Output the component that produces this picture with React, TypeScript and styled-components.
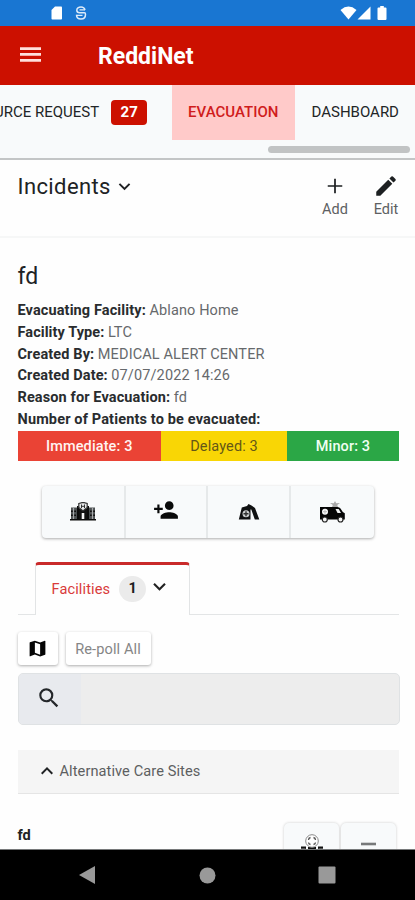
import React from "react";
import styled, { createGlobalStyle } from "styled-components";

const GlobalStyle = createGlobalStyle`
  *, *::before, *::after { box-sizing: border-box; }
  body { margin: 0; background: #fff; font-family: Roboto, "Liberation Sans", sans-serif; }
  svg { display: block; flex: none; }
`;

const Screen = styled.div`
  width: 415px;
  height: 900px;
  display: flex;
  flex-direction: column;
  overflow: hidden;
  background: #fefefe;
  color: #202224;
`;

const StatusBar = styled.div`
  flex: none;
  height: 26px;
  padding: 0 28px 0 51px;
  display: flex;
  align-items: center;
  justify-content: space-between;
  background: #1976d2;
`;

const StatusGroup = styled.div<{ $gap: number }>`
  display: flex;
  align-items: center;
  gap: ${(p) => p.$gap}px;
`;

const BatterySlot = styled.div`
  margin-left: 6px;
`;

const AppBar = styled.header`
  flex: none;
  height: 59px;
  display: flex;
  align-items: center;
  padding: 0 0 2px 20px;
  gap: 57px;
  background: #cc1000;
  color: #fff;
`;

const Brand = styled.h1`
  margin: 4px 0 0;
  font-size: 23px;
  font-weight: 700;
  line-height: 30px;
`;

const TabStrip = styled.nav`
  flex: none;
  height: 75px;
  background: #f8fafb;
  border-bottom: 2px solid #c3c5c6;
  overflow: hidden;
`;

const TabTrack = styled.div`
  display: flex;
  width: 421px;
  height: 55px;
  margin-left: -6px;
`;

const Tab = styled.div<{ $width: number; $active?: boolean; $indent?: number }>`
  flex: none;
  width: ${(p) => p.$width}px;
  padding: 0 0 1px ${(p) => p.$indent ?? 0}px;
  display: flex;
  align-items: center;
  justify-content: ${(p) => (p.$active ? "center" : "flex-start")};
  font-size: 15px;
  font-weight: ${(p) => (p.$active ? 500 : 400)};
  white-space: nowrap;
  color: ${(p) => (p.$active ? "#d01c1c" : "#222527")};
  background: ${(p) => (p.$active ? "#ffcac9" : "transparent")};
`;

const CountBadge = styled.span`
  width: 36px;
  height: 25px;
  margin-left: 12px;
  border-radius: 4px;
  display: grid;
  place-items: center;
  background: #cc1000;
  color: #fff;
  font-size: 15px;
  font-weight: 700;
`;

const ScrollThumb = styled.div`
  width: 142px;
  height: 7px;
  margin: 6px 0 0 268px;
  border-radius: 4px;
  background: #c1c3c4;
`;

const IncidentBar = styled.section`
  flex: none;
  height: 78px;
  padding: 12px 16px 0 17.5px;
  display: flex;
  justify-content: space-between;
  border-bottom: 2px solid #f6f7f7;
`;

const IncidentPicker = styled.div`
  display: flex;
  align-items: center;
  height: 28px;
  gap: 2px;
  font-size: 22px;
  letter-spacing: 0.4px;
`;

const Actions = styled.div`
  display: flex;
  gap: 25px;
`;

const Action = styled.div`
  display: flex;
  flex-direction: column;
  align-items: center;
  padding-top: 1px;
  font-size: 14.5px;
  line-height: 18px;
  color: #5d6062;
  gap: 2px;
  svg { color: #1d2022; }
`;

const Content = styled.main`
  flex: 1;
  min-height: 0;
  padding: 25px 16px 0 17.5px;
  overflow: hidden;
`;

const Title = styled.h2`
  margin: 0;
  height: 37px;
  font-size: 23px;
  font-weight: 400;
  line-height: 28px;
`;

const Details = styled.dl`
  margin: 0;
  font-size: 14.5px;
  line-height: 21.8px;
  height: 131px;
`;

const DetailRow = styled.div<{ $space: number }>`
  display: flex;
  gap: 3.5px;
  white-space: nowrap;
  letter-spacing: ${(p) => p.$space}px;
`;

const Term = styled.dt`
  font-weight: 700;
  color: #292c2e;
`;

const Value = styled.dd`
  margin: 0;
  color: #66696c;
`;

const Triage = styled.div`
  display: grid;
  grid-template-columns: 143.5px 126px 112px;
  height: 30px;
`;

const TriageCell = styled.div<{ $bg: string; $color: string; $weight: number }>`
  display: grid;
  place-items: center;
  background: ${(p) => p.$bg};
  color: ${(p) => p.$color};
  font-size: 14.5px;
  font-weight: ${(p) => p.$weight};
  letter-spacing: 0.12px;
`;

const ButtonGroup = styled.div`
  width: 332px;
  height: 52px;
  margin: 25px 0 0 24.5px;
  display: grid;
  grid-template-columns: 82px 82px 83px 85px;
  border-radius: 4px;
  background: #f8fafb;
  box-shadow: 0 1px 3px rgba(0, 0, 0, 0.32);
`;

const GroupButton = styled.div<{ $lift?: number }>`
  display: grid;
  place-items: center;
  padding-bottom: ${(p) => p.$lift ?? 0}px;
  color: #090a0a;
  & + & { border-left: 2px solid #e6e9ea; }
`;

const TabHeader = styled.div`
  display: flex;
  height: 53px;
  width: 381px;
  margin-top: 24px;
  &::before { content: ""; width: 17px; border-bottom: 1px solid #e3e5e6; }
  &::after { content: ""; flex: 1; border-bottom: 1px solid #e3e5e6; }
`;

const FacilityTab = styled.div`
  width: 155px;
  padding: 0 0 3px 16px;
  display: flex;
  align-items: center;
  border: 1px solid #e2e4e5;
  border-top: 3px solid #c92a2a;
  border-bottom: 0;
  border-radius: 4px 4px 0 0;
  color: #d93b3b;
  font-size: 14.6px;
  letter-spacing: 0.1px;
  svg { color: #222; margin: -5px 0 0 1px; }
`;

const CountPill = styled.span`
  width: 27px;
  height: 26px;
  margin-left: 9px;
  border-radius: 13px;
  display: grid;
  place-items: center;
  background: #ebebeb;
  color: #1d1d1d;
  font-size: 14.5px;
  font-weight: 700;
`;

const Toolbar = styled.div`
  display: flex;
  gap: 8px;
  margin-top: 17px;
`;

const ToolButton = styled.div<{ $width: number }>`
  width: ${(p) => p.$width}px;
  height: 33px;
  border-radius: 3px;
  display: grid;
  place-items: center;
  background: #fff;
  box-shadow: 0 1px 3px rgba(0, 0, 0, 0.32);
  color: #868686;
  font-size: 14.6px;
  letter-spacing: 0.1px;
  svg { color: #050505; }
`;

const SearchBox = styled.div`
  width: 382px;
  height: 52px;
  margin-top: 8px;
  display: flex;
  border: 1px solid #dfe2e4;
  border-radius: 5px;
  overflow: hidden;
  background: #ededed;
`;

const SearchAddon = styled.div`
  width: 62px;
  padding: 0 2px 2px 0;
  display: grid;
  place-items: center;
  background: #e8eaee;
  color: #24272a;
`;

const Accordion = styled.div`
  width: 381.5px;
  height: 44px;
  margin-top: 25px;
  padding: 0 0 2px 17px;
  display: flex;
  align-items: center;
  gap: 1px;
  background: #f5f5f5;
  border-bottom: 1px solid #e5e5e5;
  color: #5d5f61;
  font-size: 14.6px;
  letter-spacing: 0.08px;
  svg { color: #202224; }
`;

const SiteRow = styled.div`
  display: flex;
  justify-content: space-between;
  width: 378.5px;
  margin-top: 29px;
  font-size: 14.6px;
  font-weight: 700;
  line-height: 24px;
`;

const SiteActions = styled.div`
  display: flex;
  gap: 2px;
`;

const SiteButton = styled.div`
  width: 55px;
  height: 52px;
  border-radius: 5px;
  display: flex;
  justify-content: center;
  padding-top: 11px;
  background: #f8fafb;
  box-shadow: 0 0 3px rgba(0, 0, 0, 0.2);
`;

const NavBar = styled.footer`
  flex: none;
  height: 51px;
  padding: 0 79px 0 78px;
  display: flex;
  align-items: center;
  justify-content: space-between;
  background: #000;
  border-top: 1px solid #77797a;
`;

const MdIcon = ({ d, size = 24 }: { d: string; size?: number }) => (
  <svg width={size} height={size} viewBox="0 0 24 24" fill="currentColor">
    <path d={d} />
  </svg>
);

const CHEVRON_DOWN = "M7.41 8.59 12 13.17l4.59-4.58L18 10l-6 6-6-6z";
const CHEVRON_UP = "M7.41 15.41 12 10.83l4.59 4.58L18 14l-6-6-6 6z";
const PLUS = "M18.700 12.800h-5.900v5.900h-1.600v-5.900H5.300v-1.600h5.900V5.300h1.600v5.900h5.900z";
const PENCIL =
  "M3 17.25V21h3.75L17.81 9.94l-3.75-3.75L3 17.25zM20.71 7.04a1 1 0 0 0 0-1.41l-2.34-2.34a1 1 0 0 0-1.41 0l-1.83 1.83 3.75 3.75 1.83-1.83z";
const PERSON_ADD =
  "M15 12c2.21 0 4-1.79 4-4s-1.79-4-4-4-4 1.79-4 4 1.79 4 4 4zm-9-2V7H4v3H1v2h3v3h2v-3h3v-2H6zm9 4c-2.67 0-8 1.34-8 4v2h16v-2c0-2.66-5.33-4-8-4z";
const MAP =
  "M20.5 3l-.16.03L15 5.1 9 3 3.36 4.9c-.21.07-.36.25-.36.48V20.5c0 .28.22.5.5.5l.16-.03L9 18.9l6 2.1 5.64-1.9c.21-.07.36-.25.36-.48V3.5c0-.28-.22-.5-.5-.5zM15 19l-6-2.11V5l6 2.11V19z";
const SEARCH =
  "M15.5 14h-.79l-.28-.27A6.47 6.47 0 0 0 16 9.5 6.5 6.5 0 1 0 9.5 16c1.61 0 3.09-.59 4.23-1.57l.27.28v.79l5 4.99L20.49 19l-4.99-5zm-6 0C7.01 14 5 11.99 5 9.5S7.01 5 9.5 5 14 7.01 14 9.5 11.99 14 9.5 14z";

const SdCardIcon = () => (
  <svg width="12" height="14" viewBox="0 0 12 14" fill="#fff">
    <path d="M4 .5h6.2Q11 .5 11 1.3v11.4q0 .8-.8.8H1.3q-.8 0-.8-.8V4z" />
  </svg>
);

const SyncIcon = () => (
  <svg width="12" height="14" viewBox="0 0 12 14" fill="none" stroke="#dcebfa" strokeWidth="1.5">
    <path d="M10 4C9.500 2 8 1 6 1 3.500 1 1.800 2.400 1.800 4.200c0 1.600 1 2.500 3 2.500h4.700c.700 0 1 .500 1 1.500C10.500 11.500 8.700 13 6 13s-4.500-1.500-4.500-4.300" />
    <path d="M4.500 3.900H10M1.500 9.300h6" strokeWidth="1.300" />
  </svg>
);

const WifiIcon = () => (
  <svg width="17" height="14" viewBox="0 0 17 14" fill="#fff">
    <path d="M.5 4Q8.500-2.800 16.500 4L8.500 13.500z" />
  </svg>
);

const SignalIcon = () => (
  <svg width="14" height="14" viewBox="0 0 14 14" fill="#fff">
    <path d="M13.500.5v13H.5z" />
  </svg>
);

const BatteryIcon = () => (
  <svg width="10" height="14" viewBox="0 0 10 14" fill="#fff">
    <path d="M3.200 0h3.600v1.500h1.700q1 0 1 1v10.500q0 1-1 1h-7q-1 0-1-1V2.500q0-1 1-1h1.700z" />
  </svg>
);

const MenuIcon = () => (
  <svg width="21" height="15" viewBox="0 0 21 15" fill="#ffdfdc">
    <path d="M0 .3h21v2.700H0zM0 6.100h21v2.700H0zM0 12h21v2.700H0z" />
  </svg>
);

const HospitalIcon = () => (
  <svg width="26" height="20" viewBox="0 0 26 20">
    <path d="M1 5.500h7V17H1zM18 5.500h7V17h-7z" fill="#4c5052" />
    <path d="M0 17h26v1.500H0zM7 4h2.500v13H7zM16.500 4H19v13h-2.500z" fill="#0b0b0b" />
    <path d="M1 8.500h5v1.500H1zM20 8.500h5v1.500h-5zM1 12.500h5V14H1zM20 12.500h5V14h-5z" fill="#111" />
    <path d="M3.500 6v11M22.500 6v11" stroke="#a5a8aa" strokeWidth="1.200" />
    <path d="M9 7h8v10H9z" fill="#111" />
    <path d="M11.700 11h2.600v6h-2.600z" fill="#f5f5f5" />
    <path d="M8.800 1.500 13 .3l4.200 1.200v4L13 9 8.800 5.500z" fill="#e7e9ea" stroke="#333" strokeWidth="1.200" />
    <path d="M11.500 2.500v3.600M14.500 2.500v3.600M11.500 4.300h3" stroke="#333" />
  </svg>
);

const TentIcon = () => (
  <svg width="22" height="18" viewBox="0 0 22 18">
    <path d="M3.800 4.500 9 3l1.500-2 3 1.500L17 5l4.300 11.500h-4.500L13.300 6.500h-.8v10H.8z" fill="#101112" />
    <circle cx="8" cy="10.800" r="3.500" fill="#cdd0d1" />
    <path d="M8 8.300v5M5.500 10.800h5" stroke="#333" strokeWidth="1.400" />
  </svg>
);

const AmbulanceIcon = () => (
  <svg width="27" height="22" viewBox="0 0 27 22">
    <path d="M1 6h17.500q2 0 3 1.500l2.300 3.500 2 1.200v6.300H1z" fill="#050505" />
    <path d="M16.500 8h3.200l2.300 4h-3.500z" fill="#f0f2f2" />
    <circle cx="6" cy="10.700" r="3" fill="#fff" />
    <path d="M6 8.700v4M4 10.700h4" stroke="#bbb" />
    <g fill="#f4f4f4" stroke="#222" strokeWidth="1.200">
      <circle cx="5.800" cy="18.500" r="2.500" />
      <circle cx="21.500" cy="18.500" r="2.500" />
    </g>
    <path d="m16 0 1.200 2.300 3.800-.3-2.800 2 .8 2h-6l.8-2L11 2l3.800.3z" fill="#a8a8a8" />
  </svg>
);

const SiteIcon = () => (
  <svg width="24" height="25" viewBox="0 0 24 25">
    <path d="M1 12.500h5v10H1zM18 12.500h5v10h-5zM8 13h8v10H8z" fill="#111" />
    <path d="M1 15.200h4.500M18.500 15.200H23" stroke="#ddd" />
    <circle cx="12" cy="7" r="6.300" fill="#fff" stroke="#888" strokeWidth="1" />
    <path d="M10.500 3.500Q8.500 4 8.500 6M13.500 3.500q2 .5 2 2.500M8.500 8.500q0 1.500 2 2M15.500 8.500q0 1.500-2 2" fill="none" stroke="#555" strokeWidth="1.300" />
  </svg>
);

const DashIcon = () => (
  <svg width="15" height="22" viewBox="0 0 15 22">
    <path d="M0 8.700h15v2.600H0z" fill="#77797a" />
  </svg>
);

const details = [
  { term: "Evacuating Facility:", value: "Ablano Home", space: 0.12 },
  { term: "Facility Type:", value: "LTC", space: 0.08 },
  { term: "Created By:", value: "MEDICAL ALERT CENTER", space: 0.13 },
  { term: "Created Date:", value: "07/07/2022 14:26", space: 0.12 },
  { term: "Reason for Evacuation:", value: "fd", space: 0.12 },
  { term: "Number of Patients to be evacuated:", value: "", space: 0.15 },
];

const triage = [
  { label: "Immediate: 3", bg: "#ea4335", color: "#fff4f2", weight: 500 },
  { label: "Delayed: 3", bg: "#f9d605", color: "#645618", weight: 400 },
  { label: "Minor: 3", bg: "#2ba746", color: "#f0fff3", weight: 500 },
];

export default function App() {
  return (
    <>
      <GlobalStyle />
      <Screen>
        <StatusBar>
          <StatusGroup $gap={12}>
            <SdCardIcon />
            <SyncIcon />
          </StatusGroup>
          <StatusGroup $gap={0}>
            <WifiIcon />
            <SignalIcon />
            <BatterySlot>
              <BatteryIcon />
            </BatterySlot>
          </StatusGroup>
        </StatusBar>
        <AppBar>
          <MenuIcon />
          <Brand>ReddiNet</Brand>
        </AppBar>
        <TabStrip>
          <TabTrack>
            <Tab $width={177.5}>
              URCE REQUEST
              <CountBadge>27</CountBadge>
            </Tab>
            <Tab $width={123.5} $active>
              EVACUATION
            </Tab>
            <Tab $width={120} $indent={16.5}>
              DASHBOARD
            </Tab>
          </TabTrack>
          <ScrollThumb />
        </TabStrip>
        <IncidentBar>
          <IncidentPicker>
            Incidents
            <MdIcon d={CHEVRON_DOWN} size={23} />
          </IncidentPicker>
          <Actions>
            <Action>
              <MdIcon d={PLUS} size={26} />
              Add
            </Action>
            <Action>
              <MdIcon d={PENCIL} size={26} />
              Edit
            </Action>
          </Actions>
        </IncidentBar>
        <Content>
          <Title>fd</Title>
          <Details>
            {details.map((d) => (
              <DetailRow key={d.term} $space={d.space}>
                <Term>{d.term}</Term>
                {d.value && <Value>{d.value}</Value>}
              </DetailRow>
            ))}
          </Details>
          <Triage>
            {triage.map((t) => (
              <TriageCell key={t.label} $bg={t.bg} $color={t.color} $weight={t.weight}>
                {t.label}
              </TriageCell>
            ))}
          </Triage>
          <ButtonGroup>
            <GroupButton><HospitalIcon /></GroupButton>
            <GroupButton $lift={5}><MdIcon d={PERSON_ADD} size={26} /></GroupButton>
            <GroupButton><TentIcon /></GroupButton>
            <GroupButton><AmbulanceIcon /></GroupButton>
          </ButtonGroup>
          <TabHeader>
            <FacilityTab>
              Facilities
              <CountPill>1</CountPill>
              <MdIcon d={CHEVRON_DOWN} size={25} />
            </FacilityTab>
          </TabHeader>
          <Toolbar>
            <ToolButton $width={40}>
              <MdIcon d={MAP} size={21} />
            </ToolButton>
            <ToolButton $width={85}>Re-poll All</ToolButton>
          </Toolbar>
          <SearchBox>
            <SearchAddon>
              <MdIcon d={SEARCH} size={26} />
            </SearchAddon>
          </SearchBox>
          <Accordion>
            <MdIcon d={CHEVRON_UP} size={24} />
            Alternative Care Sites
          </Accordion>
          <SiteRow>
            fd
            <SiteActions>
              <SiteButton><SiteIcon /></SiteButton>
              <SiteButton><DashIcon /></SiteButton>
            </SiteActions>
          </SiteRow>
        </Content>
        <NavBar>
          <svg width="18" height="18" viewBox="0 0 18 18" fill="#999"><path d="M17 0v18L1 9z" /></svg>
          <svg width="17" height="17" viewBox="0 0 17 17" fill="#999"><circle cx="8.500" cy="8.500" r="8" /></svg>
          <svg width="18" height="18" viewBox="0 0 18 18" fill="#999"><rect x=".5" y=".5" width="17" height="17" rx="1" /></svg>
        </NavBar>
      </Screen>
    </>
  );
}
